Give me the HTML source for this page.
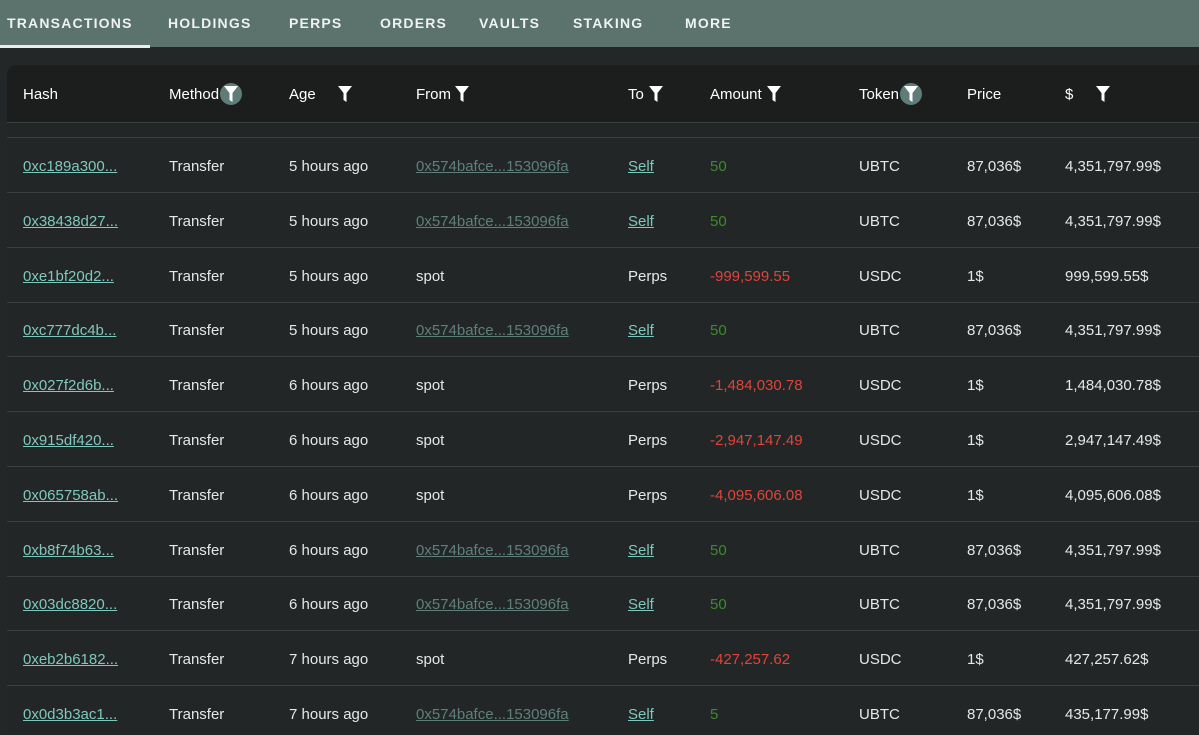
<!DOCTYPE html>
<html><head><meta charset="utf-8"><style>
*{margin:0;padding:0;box-sizing:border-box}
html,body{width:1199px;height:735px;overflow:hidden}
body{background:#232727;font-family:"Liberation Sans",sans-serif;color:#e6e8e8;position:relative}
.nav{position:absolute;left:0;top:0;width:1199px;height:47px;background:#5b726d}
.nav span{position:absolute;top:15px;font-size:14px;letter-spacing:1.2px;color:#eef2f1;font-weight:bold}
.ul{position:absolute;left:0;top:45px;width:150px;height:3px;background:#e8eeed}
.card{position:absolute;left:7px;top:65px;width:1192px;height:670px;background:#222626;border-radius:10px 0 0 0;overflow:hidden}
.hdr{position:absolute;left:0;top:0;width:100%;height:58px;background:#1c1e1e;border-bottom:1px solid #3a3f3f}
.sp{position:absolute;left:0;top:58px;width:100%;height:15px;border-bottom:1px solid #3a3f3f}
.c{position:absolute;font-size:15px;white-space:nowrap}
.h{top:21px;color:#fff;font-size:15px}
.row{position:absolute;left:0;width:100%;height:55px;border-bottom:1px solid #3a3f3f}
.row .c{top:20px}
.lk{color:#7fc8bd;text-decoration:underline}
.fr{color:#5f807a;text-decoration:underline}
.g{color:#3f8a2e}.r{color:#e0443a}
.f{position:absolute;top:18px;width:22px;height:22px;border-radius:50%}
.f.a{background:#5f7d78}
.f svg{position:absolute;left:4px;top:3px}
</style></head><body>
<div class="nav">
<span style="left:7px">TRANSACTIONS</span><span style="left:168px">HOLDINGS</span><span style="left:289px">PERPS</span><span style="left:380px">ORDERS</span><span style="left:479px">VAULTS</span><span style="left:573px">STAKING</span><span style="left:685px">MORE</span>
</div><div class="ul"></div>
<div class="card">
<div class="hdr">
<span class="c h" style="left:16px">Hash</span>
<span class="c h" style="left:162px">Method</span><div class="f a" style="left:213px"><svg width="14" height="16" viewBox="0 0 14 16"><path d="M0 0H14L8.5 7V16L5.5 14V7Z" fill="#fff"/></svg></div>
<span class="c h" style="left:282px">Age</span><div class="f" style="left:327px"><svg width="14" height="16" viewBox="0 0 14 16"><path d="M0 0H14L8.5 7V16L5.5 14V7Z" fill="#fff"/></svg></div>
<span class="c h" style="left:409px">From</span><div class="f" style="left:444px"><svg width="14" height="16" viewBox="0 0 14 16"><path d="M0 0H14L8.5 7V16L5.5 14V7Z" fill="#fff"/></svg></div>
<span class="c h" style="left:621px">To</span><div class="f" style="left:638px"><svg width="14" height="16" viewBox="0 0 14 16"><path d="M0 0H14L8.5 7V16L5.5 14V7Z" fill="#fff"/></svg></div>
<span class="c h" style="left:703px">Amount</span><div class="f" style="left:756px"><svg width="14" height="16" viewBox="0 0 14 16"><path d="M0 0H14L8.5 7V16L5.5 14V7Z" fill="#fff"/></svg></div>
<span class="c h" style="left:852px">Token</span><div class="f a" style="left:893px"><svg width="14" height="16" viewBox="0 0 14 16"><path d="M0 0H14L8.5 7V16L5.5 14V7Z" fill="#fff"/></svg></div>
<span class="c h" style="left:960px">Price</span>
<span class="c h" style="left:1058px">$</span><div class="f" style="left:1085px"><svg width="14" height="16" viewBox="0 0 14 16"><path d="M0 0H14L8.5 7V16L5.5 14V7Z" fill="#fff"/></svg></div>
</div>
<div class="sp"></div>
<div class="row" style="top:73px"><span class="c lk" style="left:16px">0xc189a300...</span><span class="c" style="left:162px">Transfer</span><span class="c" style="left:282px">5 hours ago</span><span class="c fr" style="left:409px">0x574bafce...153096fa</span><span class="c lk" style="left:621px">Self</span><span class="c g" style="left:703px">50</span><span class="c" style="left:852px">UBTC</span><span class="c" style="left:960px">87,036$</span><span class="c" style="left:1058px">4,351,797.99$</span></div>
<div class="row" style="top:128px"><span class="c lk" style="left:16px">0x38438d27...</span><span class="c" style="left:162px">Transfer</span><span class="c" style="left:282px">5 hours ago</span><span class="c fr" style="left:409px">0x574bafce...153096fa</span><span class="c lk" style="left:621px">Self</span><span class="c g" style="left:703px">50</span><span class="c" style="left:852px">UBTC</span><span class="c" style="left:960px">87,036$</span><span class="c" style="left:1058px">4,351,797.99$</span></div>
<div class="row" style="top:183px"><span class="c lk" style="left:16px">0xe1bf20d2...</span><span class="c" style="left:162px">Transfer</span><span class="c" style="left:282px">5 hours ago</span><span class="c" style="left:409px">spot</span><span class="c" style="left:621px">Perps</span><span class="c r" style="left:703px">-999,599.55</span><span class="c" style="left:852px">USDC</span><span class="c" style="left:960px">1$</span><span class="c" style="left:1058px">999,599.55$</span></div>
<div class="row" style="top:237px"><span class="c lk" style="left:16px">0xc777dc4b...</span><span class="c" style="left:162px">Transfer</span><span class="c" style="left:282px">5 hours ago</span><span class="c fr" style="left:409px">0x574bafce...153096fa</span><span class="c lk" style="left:621px">Self</span><span class="c g" style="left:703px">50</span><span class="c" style="left:852px">UBTC</span><span class="c" style="left:960px">87,036$</span><span class="c" style="left:1058px">4,351,797.99$</span></div>
<div class="row" style="top:292px"><span class="c lk" style="left:16px">0x027f2d6b...</span><span class="c" style="left:162px">Transfer</span><span class="c" style="left:282px">6 hours ago</span><span class="c" style="left:409px">spot</span><span class="c" style="left:621px">Perps</span><span class="c r" style="left:703px">-1,484,030.78</span><span class="c" style="left:852px">USDC</span><span class="c" style="left:960px">1$</span><span class="c" style="left:1058px">1,484,030.78$</span></div>
<div class="row" style="top:347px"><span class="c lk" style="left:16px">0x915df420...</span><span class="c" style="left:162px">Transfer</span><span class="c" style="left:282px">6 hours ago</span><span class="c" style="left:409px">spot</span><span class="c" style="left:621px">Perps</span><span class="c r" style="left:703px">-2,947,147.49</span><span class="c" style="left:852px">USDC</span><span class="c" style="left:960px">1$</span><span class="c" style="left:1058px">2,947,147.49$</span></div>
<div class="row" style="top:402px"><span class="c lk" style="left:16px">0x065758ab...</span><span class="c" style="left:162px">Transfer</span><span class="c" style="left:282px">6 hours ago</span><span class="c" style="left:409px">spot</span><span class="c" style="left:621px">Perps</span><span class="c r" style="left:703px">-4,095,606.08</span><span class="c" style="left:852px">USDC</span><span class="c" style="left:960px">1$</span><span class="c" style="left:1058px">4,095,606.08$</span></div>
<div class="row" style="top:457px"><span class="c lk" style="left:16px">0xb8f74b63...</span><span class="c" style="left:162px">Transfer</span><span class="c" style="left:282px">6 hours ago</span><span class="c fr" style="left:409px">0x574bafce...153096fa</span><span class="c lk" style="left:621px">Self</span><span class="c g" style="left:703px">50</span><span class="c" style="left:852px">UBTC</span><span class="c" style="left:960px">87,036$</span><span class="c" style="left:1058px">4,351,797.99$</span></div>
<div class="row" style="top:511px"><span class="c lk" style="left:16px">0x03dc8820...</span><span class="c" style="left:162px">Transfer</span><span class="c" style="left:282px">6 hours ago</span><span class="c fr" style="left:409px">0x574bafce...153096fa</span><span class="c lk" style="left:621px">Self</span><span class="c g" style="left:703px">50</span><span class="c" style="left:852px">UBTC</span><span class="c" style="left:960px">87,036$</span><span class="c" style="left:1058px">4,351,797.99$</span></div>
<div class="row" style="top:566px"><span class="c lk" style="left:16px">0xeb2b6182...</span><span class="c" style="left:162px">Transfer</span><span class="c" style="left:282px">7 hours ago</span><span class="c" style="left:409px">spot</span><span class="c" style="left:621px">Perps</span><span class="c r" style="left:703px">-427,257.62</span><span class="c" style="left:852px">USDC</span><span class="c" style="left:960px">1$</span><span class="c" style="left:1058px">427,257.62$</span></div>
<div class="row" style="top:621px"><span class="c lk" style="left:16px">0x0d3b3ac1...</span><span class="c" style="left:162px">Transfer</span><span class="c" style="left:282px">7 hours ago</span><span class="c fr" style="left:409px">0x574bafce...153096fa</span><span class="c lk" style="left:621px">Self</span><span class="c g" style="left:703px">5</span><span class="c" style="left:852px">UBTC</span><span class="c" style="left:960px">87,036$</span><span class="c" style="left:1058px">435,177.99$</span></div>
</div>
</body></html>
